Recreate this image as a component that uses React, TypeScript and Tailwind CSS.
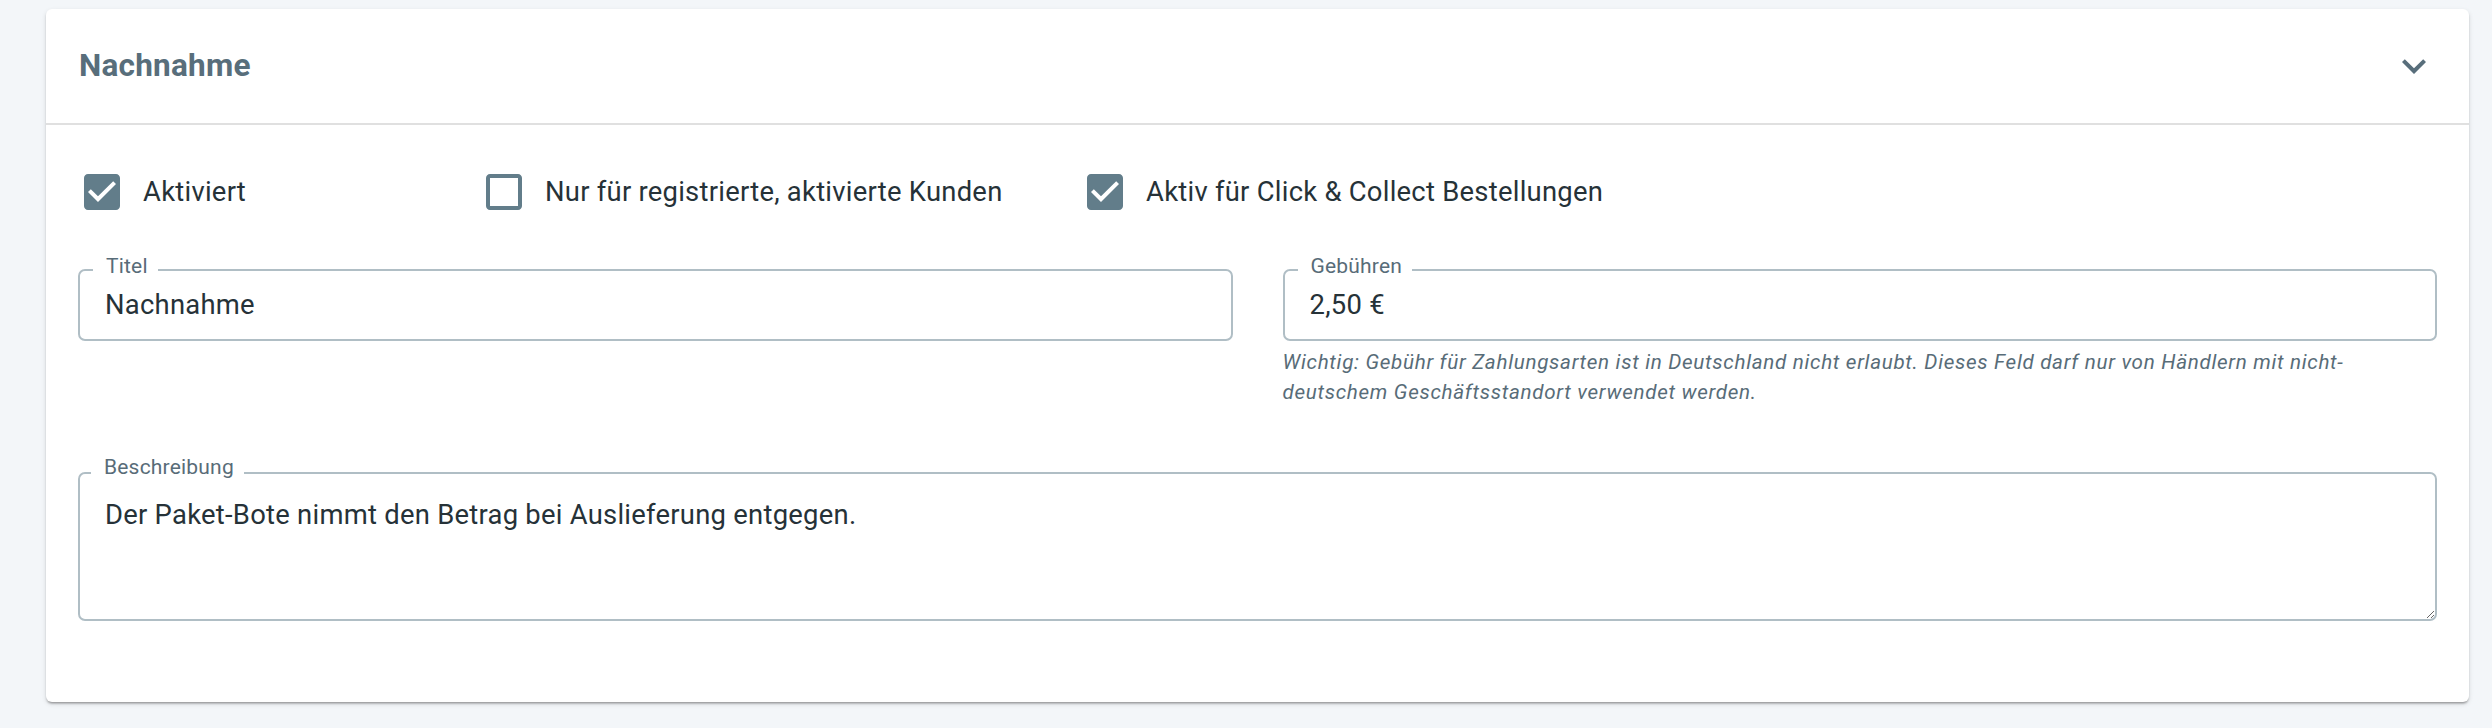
import React from 'react';

const CheckboxIcon: React.FC<{ checked: boolean }> = ({ checked }) => (
  <svg width="36" height="36" viewBox="3 3 18 18" className="shrink-0 fill-[#627d8a]">
    {checked ? (
      <path d="M19 3H5c-1.11 0-2 .9-2 2v14c0 1.1.89 2 2 2h14c1.11 0 2-.9 2-2V5c0-1.1-.89-2-2-2zm-9 14l-5-5 1.41-1.41L10 14.17l7.59-7.59L19 8l-9 9z" />
    ) : (
      <path d="M19 5v14H5V5h14m0-2H5c-1.1 0-2 .9-2 2v14c0 1.1.9 2 2 2h14c1.1 0 2-.9 2-2V5c0-1.1-.9-2-2-2z" />
    )}
  </svg>
);

const CheckItem: React.FC<{ label: string; checked: boolean; className?: string }> = ({ label, checked, className }) => (
  <label className={`flex items-center ${className ?? ''}`}>
    <span className="ml-[6px]">
      <CheckboxIcon checked={checked} />
    </span>
    <span className="ml-[23px] text-[27.4px] leading-[36px] tracking-[0.0094em] text-[#263238] whitespace-nowrap">
      {label}
    </span>
  </label>
);

const FieldLabel: React.FC<{ children: React.ReactNode }> = ({ children }) => (
  <span className="absolute left-[13px] -top-[15px] bg-white pl-[13px] pr-[10px] text-[21px] leading-[20px] tracking-[0.0094em] text-[#586c78]">
    {children}
  </span>
);

const TextField: React.FC<{ label: string; value: string }> = ({ label, value }) => (
  <div className="relative h-[72px] border-2 border-[#b0bec5] rounded-[7px] flex items-center pl-[25px]">
    <FieldLabel>{label}</FieldLabel>
    <span className="text-[27.4px] leading-[39px] tracking-[0.0094em] text-[#263238]">{value}</span>
  </div>
);

const App: React.FC = () => {
  return (
    <div className="min-h-screen bg-[#f3f6f9] pt-[9px] pl-[46px] pr-[23px] pb-[26px] font-[family-name:Roboto,sans-serif]">
      <div className="bg-white rounded-[6px] shadow-[0_3px_2px_-2px_rgba(0,0,0,0.2),0_2px_2px_0_rgba(0,0,0,0.14),0_2px_5px_0_rgba(0,0,0,0.12)]">
        {/* Header */}
        <header className="h-[116px] flex items-center justify-between pl-[33px] pr-[31px] border-b-2 border-[#e0e0e0]">
          <h2 className="text-[31.5px] font-bold tracking-[0.0075em] text-[#586e7b]">Nachnahme</h2>
          <svg width="48" height="48" viewBox="0 0 24 24" className="fill-[#586e7b]">
            <path d="M16.59 8.59 12 13.17 7.41 8.59 6 10l6 6 6-6z" />
          </svg>
        </header>

        {/* Content */}
        <div className="px-[32px] pt-[49px] pb-[81px]">
          <div className="flex items-center h-[36px]">
            <CheckItem label="Aktiviert" checked className="w-[402px]" />
            <CheckItem label="Nur für registrierte, aktivierte Kunden" checked={false} className="w-[601px]" />
            <CheckItem label="Aktiv für Click & Collect Bestellungen" checked />
          </div>

          <div className="grid grid-cols-2 gap-x-[50px] mt-[59px]">
            <TextField label="Titel" value="Nachnahme" />
            <div>
              <TextField label="Gebühren" value="2,50 €" />
              <p className="mt-[6px] text-[20.6px] leading-[30px] italic tracking-[0.034em] text-[#586c78]">
                Wichtig: Gebühr für Zahlungsarten ist in Deutschland nicht erlaubt. Dieses Feld darf nur von Händlern mit nicht-
                <br />
                deutschem Geschäftsstandort verwendet werden.
              </p>
            </div>
          </div>

          <div className="relative mt-[65px]">
            <FieldLabel>Beschreibung</FieldLabel>
            <textarea
              defaultValue="Der Paket-Bote nimmt den Betrag bei Auslieferung entgegen."
              className="block w-full h-[149px] border-2 border-[#b0bec5] rounded-[7px] pl-[25px] pt-[22px] text-[27.4px] leading-[39px] tracking-[0.0094em] text-[#263238] outline-none"
            />
          </div>
        </div>
      </div>
    </div>
  );
};

export default App;
